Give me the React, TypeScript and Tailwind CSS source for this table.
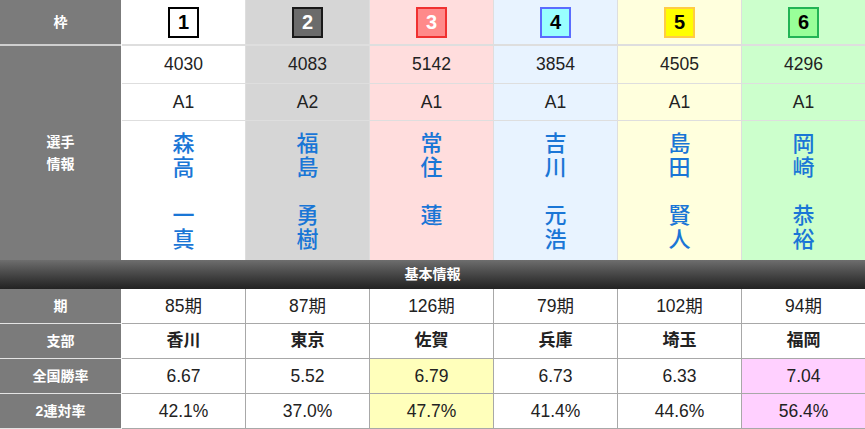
import type { ReactNode } from "react";

type Racer = {
  no: number;
  id: string;
  grade: string;
  family: string;
  given: string;
  period: string;
  branch: string;
  winRate: string;
  quinella: string;
  colBg: string;
  badge: string;
  cellBg?: string;
};

const racers: Racer[] = [
  { no: 1, id: "4030", grade: "A1", family: "森高", given: "一真", period: "85期", branch: "香川", winRate: "6.67", quinella: "42.1%", colBg: "bg-white", badge: "bg-white border-black text-black" },
  { no: 2, id: "4083", grade: "A2", family: "福島", given: "勇樹", period: "87期", branch: "東京", winRate: "5.52", quinella: "37.0%", colBg: "bg-[#d6d6d6]", badge: "bg-[#6b6b6b] border-[#1a1a1a] text-white" },
  { no: 3, id: "5142", grade: "A1", family: "常住", given: "蓮", period: "126期", branch: "佐賀", winRate: "6.79", quinella: "47.7%", colBg: "bg-[#ffdddd]", badge: "bg-[#ff8a8a] border-[#f03030] text-white", cellBg: "bg-[#ffffbb]" },
  { no: 4, id: "3854", grade: "A1", family: "吉川", given: "元浩", period: "79期", branch: "兵庫", winRate: "6.73", quinella: "41.4%", colBg: "bg-[#e8f3ff]", badge: "bg-[#99ffff] border-[#5a6cff] text-black" },
  { no: 5, id: "4505", grade: "A1", family: "島田", given: "賢人", period: "102期", branch: "埼玉", winRate: "6.33", quinella: "44.6%", colBg: "bg-[#ffffdd]", badge: "bg-[#ffff00] border-[#ffcc44] text-black" },
  { no: 6, id: "4296", grade: "A1", family: "岡崎", given: "恭裕", period: "94期", branch: "福岡", winRate: "7.04", quinella: "56.4%", colBg: "bg-[#ccffcc]", badge: "bg-[#99ff99] border-[#22b455] text-black", cellBg: "bg-[#ffd0ff]" },
];

function StatRow({ label, children }: { label: string; children: ReactNode }) {
  return (
    <div className="flex h-[35px] shrink-0">
      <div className="flex w-[122px] items-center justify-center border-b border-r border-b-[#e4e4e4] border-r-white bg-[#7b7b7b] text-[14px] font-bold text-white">
        {label}
      </div>
      {children}
    </div>
  );
}

export default function App() {
  return (
    <div
      className="h-[429px] w-[865px] overflow-hidden bg-white text-[#222]"
      style={{ fontFamily: '"Liberation Sans", "Noto Sans CJK JP", sans-serif' }}
    >
      {/* racer header: frame number, registration, class, name */}
      <div className="flex h-[260px]">
        <div className="flex w-[122px] flex-col border-r border-white bg-[#7b7b7b] text-[14px] font-bold text-white">
          <div className="flex h-[46px] items-center justify-center border-b-2 border-[#cfcfcf]">枠</div>
          <div className="flex flex-1 flex-col items-center justify-center leading-[22px]">
            <span>選手</span>
            <span>情報</span>
          </div>
        </div>
        {racers.map((r, i) => (
          <div
            key={r.no}
            className={`flex flex-1 flex-col ${r.colBg} ${i < 5 ? "border-r border-[#dedede]" : ""}`}
          >
            <div className="flex h-[46px] items-center justify-center border-b-2 border-[#dedede]">
              <span className={`flex h-[31px] w-[31px] items-center justify-center border-2 text-[20px] font-bold ${r.badge}`}>
                {r.no}
              </span>
            </div>
            <div className="flex h-[38px] items-center justify-center border-b border-[#dedede] text-[17.5px]">{r.id}</div>
            <div className="flex h-[37px] items-center justify-center border-b border-[#dedede] text-[17.5px]">{r.grade}</div>
            <div
              className="flex flex-1 flex-col items-center pt-[8px] text-[22px] font-medium text-[#1a76d6]"
              style={{ fontFamily: '"Noto Sans CJK JP", sans-serif' }}
            >
              {[...r.family].map((c, k) => (
                <span key={`f${k}`} className="flex h-[24px] items-center leading-none">{c}</span>
              ))}
              <span className="h-[24px]" />
              {[...r.given].map((c, k) => (
                <span key={`g${k}`} className="flex h-[24px] items-center leading-none">{c}</span>
              ))}
            </div>
          </div>
        ))}
      </div>

      {/* section bar */}
      <div className="flex h-[29px] items-center justify-center bg-gradient-to-b from-[#6e6e6e] to-[#222] text-[14px] font-bold text-white">
        基本情報
      </div>

      <StatRow label="期">
        {racers.map((r, i) => (
          <div key={r.no} className={`flex flex-1 items-center justify-center border-b border-[#a8a8a8] text-[17.5px] ${i < 5 ? "border-r" : ""}`}>
            {r.period}
          </div>
        ))}
      </StatRow>
      <StatRow label="支部">
        {racers.map((r, i) => (
          <div key={r.no} className={`flex flex-1 items-center justify-center border-b border-[#a8a8a8] text-[17px] font-bold ${i < 5 ? "border-r" : ""}`}>
            {r.branch}
          </div>
        ))}
      </StatRow>
      <StatRow label="全国勝率">
        {racers.map((r, i) => (
          <div key={r.no} className={`flex flex-1 items-center justify-center border-b border-[#a8a8a8] text-[17.5px] ${r.cellBg ?? ""} ${i < 5 ? "border-r" : ""}`}>
            {r.winRate}
          </div>
        ))}
      </StatRow>
      <StatRow label="2連対率">
        {racers.map((r, i) => (
          <div key={r.no} className={`flex flex-1 items-center justify-center border-b border-[#a8a8a8] text-[17.5px] ${r.cellBg ?? ""} ${i < 5 ? "border-r" : ""}`}>
            {r.quinella}
          </div>
        ))}
      </StatRow>
    </div>
  );
}
